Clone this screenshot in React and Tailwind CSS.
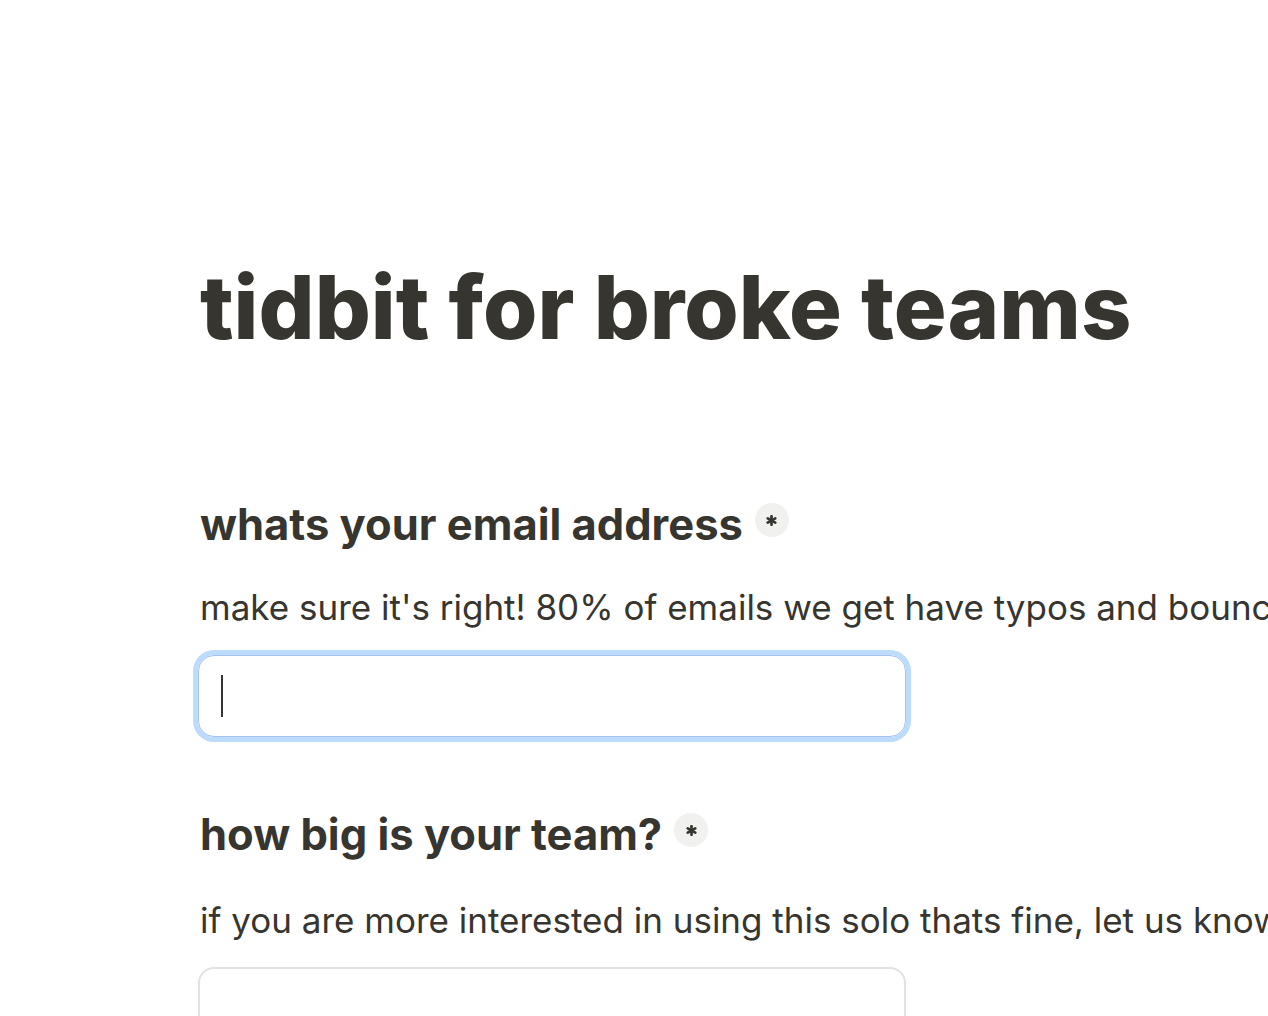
import React from "react";

function Req({ className = "" }) {
  return (
    <span className={"ml-[12px] inline-flex h-[34px] w-[34px] shrink-0 items-center justify-center rounded-full bg-[#f1f1ef] self-start " + className}>
      <svg width="11" height="11" viewBox="0 0 14 14">
        <g stroke="#37352f" strokeWidth="3.4" strokeLinecap="round">
          <line x1="7" y1="1.5" x2="7" y2="12.5" />
          <line x1="2.2" y1="4.2" x2="11.8" y2="9.8" />
          <line x1="2.2" y1="9.8" x2="11.8" y2="4.2" />
        </g>
      </svg>
    </span>
  );
}

export default function App() {
  return (
    <div
      className="min-h-[1016px] w-full overflow-hidden bg-white text-[#37352f]"
      style={{ fontFamily: "Inter, 'Noto Sans', sans-serif" }}
    >
      <div className="flex flex-col pl-[200px]">
        <h1 className="mt-[254px] whitespace-nowrap text-[88px] font-extrabold leading-[106px]">
          tidbit for broke teams
        </h1>

        <div className="mt-[138px] flex items-center">
          <span className="whitespace-nowrap text-[43.5px] font-bold leading-[52px]">
            whats your email address
          </span>
          <Req className="mt-[5px]" />
        </div>
        <p className="mt-[36px] whitespace-nowrap text-[35px] leading-[42px]">
          make sure it's right! 80% of emails we get have typos and bounce
        </p>
        <div className="-ml-[2px] mt-[27px] flex h-[82px] w-[708px] items-center rounded-[16px] border border-[#a3c3ea] px-[22px] shadow-[0_0_0_5px_#bddbfd]">
          <span className="block h-[42px] w-[2px] bg-[#37352f]" />
        </div>

        <div className="mt-[71px] flex items-center">
          <span className="whitespace-nowrap text-[43.5px] font-bold leading-[52px]">
            how big is your team?
          </span>
          <Req className="mt-[5px]" />
        </div>
        <p className="mt-[39px] whitespace-nowrap text-[35px] leading-[42px]">
          if you are more interested in using this solo thats fine, let us know
        </p>
        <div className="-ml-[2px] mt-[26px] h-[82px] w-[708px] rounded-[16px] border-2 border-[#e3e2e0]" />
      </div>
    </div>
  );
}
